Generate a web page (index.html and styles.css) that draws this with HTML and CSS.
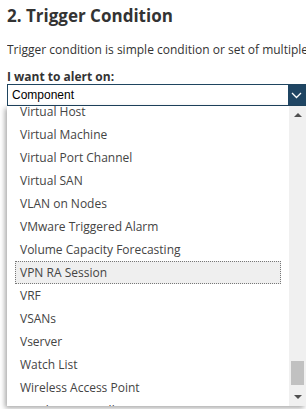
FILE: index.html
```html
<!DOCTYPE html>
<html lang="en">
<head>
    <meta charset="UTF-8">
    <meta name="viewport" content="width=device-width, initial-scale=1.0">
    <title>Trigger Condition</title>
    <link rel="stylesheet" href="styles.css">
</head>
<body>
    <h2 class="section-title">2. Trigger Condition</h2>
    <p class="section-desc">Trigger condition is simple condition or set of multiple nested conditions</p>

    <label class="field-label">I want to alert on:</label>
    <div class="combo">
        <div class="combo-value">Component</div>
        <div class="combo-btn">
            <svg width="11" height="7" viewBox="0 0 11 7"><path d="M1 1 L5.5 5.5 L10 1" fill="none" stroke="#fff" stroke-width="1.3"/></svg>
        </div>
    </div>

    <!-- open dropdown list, scrolled near the end -->
    <div class="dropdown">
        <div class="dropdown-view">
            <ul class="options">
                <li>Virtual Host</li>
                <li>Virtual Machine</li>
                <li>Virtual Port Channel</li>
                <li>Virtual SAN</li>
                <li>VLAN on Nodes</li>
                <li>VMware Triggered Alarm</li>
                <li>Volume Capacity Forecasting</li>
                <li class="active">VPN RA Session</li>
                <li>VRF</li>
                <li>VSANs</li>
                <li>Vserver</li>
                <li>Watch List</li>
                <li>Wireless Access Point</li>
                <li>Wireless Controller</li>
            </ul>
        </div>
        <div class="scrollbar">
            <span class="arrow-up"></span>
            <span class="track">
                <span class="thumb"></span>
            </span>
            <span class="arrow-down"></span>
        </div>
    </div>
</body>
</html>
```

FILE: styles.css
```css
body {
    margin: 0;
    padding: 0 0 0 7px;
    width: 299px;
    height: 409px;
    overflow: hidden;
    font-family: "Open Sans", Arial, sans-serif;
    color: #333;
    background-color: #fff;
}
.section-title {
    margin: 0;
    padding-top: 3px;
    font-size: 17px;
    font-weight: bold;
    line-height: 26px;
    color: #333;
}
.section-desc {
    margin: 12px 0 0 0;
    font-size: 12px;
    line-height: 17px;
    white-space: nowrap;
    overflow: hidden;
}
.field-label {
    display: block;
    margin-top: 12px;
    font-size: 12px;
    font-weight: bold;
    line-height: 14px;
}
.combo {
    display: flex;
    width: 299px;
    height: 22px;
    box-sizing: border-box;
    border: 1px solid #1f4560;
}
.combo-value {
    flex: 1;
    padding-left: 4px;
    font-family: "Liberation Sans", Arial, sans-serif;
    font-size: 12px;
    line-height: 20px;
    color: #000;
}
.combo-btn {
    width: 17px;
    display: flex;
    justify-content: center;
    align-items: center;
    background-color: #1f4563;
}
.dropdown {
    display: flex;
    width: 299px;
    height: 300px;
    background-color: #fff;
    box-shadow: -2px 2px 5px rgba(0, 0, 0, 0.35);
}
.dropdown-view {
    flex: 1;
    overflow: hidden;
    padding: 0 8px;
}
.options {
    list-style: none;
    margin: -6px 0 0 0;
    padding: 0;
}
.options li {
    height: 23px;
    box-sizing: border-box;
    padding-left: 4px;
    font-size: 12px;
    line-height: 21px;
    color: #444;
    border: 1px dotted transparent;
    white-space: nowrap;
}
.options li.active {
    background-color: #efefef;
    border-color: #777;
}
.scrollbar {
    width: 17px;
    display: flex;
    flex-direction: column;
    align-items: center;
    background-color: #f0f0f0;
}
.arrow-up,
.arrow-down {
    width: 0;
    height: 0;
    margin: 7px 0;
    border-left: 4px solid transparent;
    border-right: 4px solid transparent;
}
.arrow-up {
    border-bottom: 4px solid #505050;
}
.arrow-down {
    border-top: 4px solid #505050;
}
.track {
    flex: 1;
    display: flex;
    flex-direction: column;
    justify-content: flex-end;
    padding-bottom: 3px;
}
.thumb {
    width: 13px;
    height: 24px;
    background-color: #c1c1c1;
}
```
